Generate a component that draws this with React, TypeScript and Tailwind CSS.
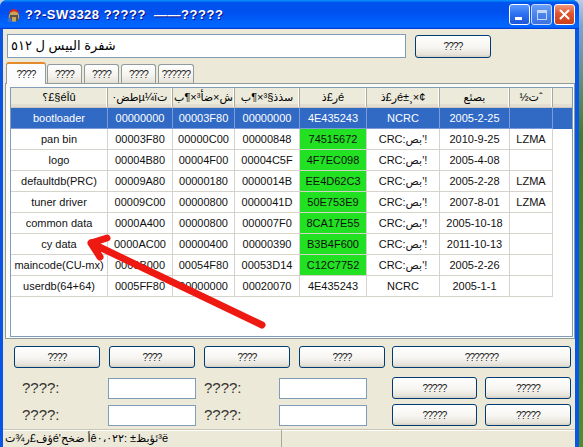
import React from "react";

type Row = {
  name: string;
  addr: string;
  size: string;
  len: string;
  crc: string;
  green: boolean;
  ok: boolean;
  date: string;
  comp: string;
  sel?: boolean;
};

const rows: Row[] = [
  { name: "bootloader", addr: "00000000", size: "00003F80", len: "00000000", crc: "4E435243", green: false, ok: false, date: "2005-2-25", comp: "", sel: true },
  { name: "pan bin", addr: "00003F80", size: "00000C00", len: "00000848", crc: "74515672", green: true, ok: true, date: "2010-9-25", comp: "LZMA" },
  { name: "logo", addr: "00004B80", size: "00004F00", len: "00004C5F", crc: "4F7EC098", green: true, ok: true, date: "2005-4-08", comp: "" },
  { name: "defaultdb(PRC)", addr: "00009A80", size: "00000180", len: "0000014B", crc: "EE4D62C3", green: true, ok: true, date: "2005-2-28", comp: "LZMA" },
  { name: "tuner driver", addr: "00009C00", size: "00000800", len: "0000041D", crc: "50E753E9", green: true, ok: true, date: "2007-8-01", comp: "LZMA" },
  { name: "common data", addr: "0000A400", size: "00000800", len: "000007F0", crc: "8CA17E55", green: true, ok: true, date: "2005-10-18", comp: "" },
  { name: "cy data", addr: "0000AC00", size: "00000400", len: "00000390", crc: "B3B4F600", green: true, ok: true, date: "2011-10-13", comp: "" },
  { name: "maincode(CU-mx)", addr: "0000B000", size: "00054F80", len: "00053D14", crc: "C12C7752", green: true, ok: true, date: "2005-2-26", comp: "" },
  { name: "userdb(64+64)", addr: "0005FF80", size: "00000000", len: "00020070", crc: "4E435243", green: false, ok: false, date: "2005-1-1", comp: "" },
];

const headers = ["؟£§éÎû", "·طضµ¼ïت", "ش×ضأ³×¶ب", "سذذ§³×¶ب", "ر£ذé", "ر£ذé±¸×¢", "بصئع", "½تˆ"];

// status bar text, cut into pieces laid out left to right
const statusParts = ["ت", "¾", "ر", "£", "ؤف", "é", "'", "ضخح", " ", "أ", "ê", "٠،٠٢٢", ":", " ", "±", "ئؤبظ", "³", "ë"];

const XpButton = ({ label, className }: { label: string; className?: string }) => (
  <button
    className={`flex h-[22px] items-center justify-center rounded-[3px] border border-[#003c74] bg-[linear-gradient(180deg,#ffffff_0%,#f6f5f1_55%,#e6e3da_88%,#d4cfc3_100%)] text-[10px] tracking-[-0.8px] text-[#222] ${className ?? ""}`}
  >
    {label}
  </button>
);

const TitleIcon = () => (
  <svg width="16" height="17" viewBox="0 0 16 17">
    <path d="M2.5 7 Q8 -1 13.5 7 Z" fill="#d8261c" />
    <circle cx="8" cy="10.5" r="5.2" fill="#c7a35c" />
    <path d="M4 9 H12 V15 H10 V11 H6 V15 H4 Z" fill="#5a5140" />
    <circle cx="3.5" cy="14" r="2" fill="#3a6fd8" />
  </svg>
);

const TitleBar = () => (
  <div className="flex h-[29px] items-center rounded-t-[7px] bg-[linear-gradient(180deg,#0997ff_0%,#0053ee_9%,#0050ee_40%,#0066ff_88%,#0066ff_93%,#005bff_95%,#003dd7_96%,#003dd7_100%)] pl-[6px] pr-[4px]">
    <TitleIcon />
    <span className="ml-[3px] text-[13px] font-bold tracking-[0.5px] text-white [text-shadow:1px_1px_#0f1089]">
      ??-SW3328 ?????&nbsp;&nbsp;——?????
    </span>
    <div className="ml-auto flex items-center">
      <div className="relative h-[21px] w-[21px] rounded-[3px] border border-white bg-[linear-gradient(180deg,#5a98ff_0%,#2b6ff0_50%,#1c57d8_100%)]">
        <div className="absolute bottom-[4px] left-[5px] h-[3px] w-[7px] bg-white" />
      </div>
      <div className="ml-[1px] flex h-[21px] w-[21px] items-center justify-center rounded-[3px] border border-[#cbdcfb] bg-[linear-gradient(180deg,#6a9ff5_0%,#4a84ec_50%,#3b72e0_100%)]">
        <div className="h-[10px] w-[10px] border border-t-[3px] border-[#c6d6f6]" />
      </div>
      <div className="ml-[2px] flex h-[21px] w-[21px] items-center justify-center rounded-[3px] border border-white bg-[linear-gradient(180deg,#f0997a_0%,#e0542d_45%,#c8401c_100%)]">
        <svg width="11" height="11" viewBox="0 0 11 11">
          <path d="M1.5 1.5 L9.5 9.5 M9.5 1.5 L1.5 9.5" stroke="white" strokeWidth="2" strokeLinecap="round" />
        </svg>
      </div>
    </div>
  </div>
);

const HeaderRow = () => (
  <div className="flex h-[20px] border-b border-[#cbc7b8] bg-[#ebeadb] shadow-[inset_0_-3px_0_#e2ded1]">
    <div className="grid grid-cols-[97px_65px_62px_65px_67px_73px_70px_43px]">
      {headers.map((h, i) => (
        <div
          key={i}
          className="flex items-center justify-center border-r border-[#aca899] text-[11px] text-black shadow-[inset_-1px_0_0_#ffffff]"
        >
          {h}
        </div>
      ))}
    </div>
  </div>
);

const DataRow = ({ r }: { r: Row }) => {
  const line = r.sel ? "border-[#7d9bd6]" : "border-[#d6d3cc]";
  const cell = `flex h-[21px] items-center justify-center border-r border-b ${line}`;
  return (
    <div
      className={`grid grid-cols-[97px_65px_62px_65px_67px_73px_70px_43px] text-[11px] ${
        r.sel ? "bg-[#316ac5] text-white" : "text-[#111]"
      }`}
    >
      <div className={cell}>{r.name}</div>
      <div className={cell}>{r.addr}</div>
      <div className={cell}>{r.size}</div>
      <div className={cell}>{r.len}</div>
      <div className={`${cell} ${r.green ? "bg-[#22e022]" : ""}`}>{r.crc}</div>
      <div className={cell}>{r.ok ? "CRC:بص'!" : "NCRC"}</div>
      <div className={cell}>{r.date}</div>
      <div className={cell}>{r.comp}</div>
    </div>
  );
};

const Field = ({ className }: { className?: string }) => (
  <div className={`h-[21px] border border-[#7f9db9] bg-white ${className ?? ""}`} />
);

const FormRow = ({ className }: { className?: string }) => (
  <div className={`flex h-[22px] items-center ${className ?? ""}`}>
    <div className="w-[105px] pl-[19px] text-[15px] text-[#333]">????:</div>
    <Field className="w-[88px]" />
    <div className="w-[83px] pl-[8px] text-[15px] text-[#333]">????:</div>
    <Field className="w-[88px]" />
    <XpButton label="?????" className="ml-[25px] w-[85px]" />
    <XpButton label="?????" className="ml-[8px] w-[86px]" />
  </div>
);

export default function App() {
  return (
    <div className="relative h-[447px] w-[583px] overflow-hidden bg-[linear-gradient(180deg,#b9cde6_0%,#7aa3d2_6%,#3f7d2e_30%,#4b8f2a_100%)] font-['Liberation_Sans','DejaVu_Sans',sans-serif]">
      <div className="flex h-full w-[579px] flex-col rounded-t-[7px] bg-[#0b55e6]">
        <TitleBar />
        <div className="ml-[3px] mr-[4px] flex flex-1 flex-col bg-[#ece9d8]">
          {/* path field */}
          <div className="ml-[4px] mt-[5px] flex h-[24px] items-start">
            <div className="flex h-[24px] w-[399px] items-center border border-[#7f9db9] bg-white pl-[3px] text-[13px] text-black">
              شفرة البيس ل ٥١٢
            </div>
            <XpButton label="????" className="ml-[9px] mt-[1px] h-[23px] w-[76px] border-[#2b4f8f]" />
          </div>

          {/* tabs */}
          <div className="relative z-10 ml-[3px] mt-[4px] flex h-[21px] items-end">
            <div className="-mb-[1px] flex h-[22px] w-[40px] items-center justify-center rounded-t-[3px] border border-t-2 border-b-0 border-[#919b9c] border-t-[#e68b2c] bg-[#fcfcfe] text-[10px] tracking-[-0.8px] text-[#222]">
              ????
            </div>
            {["????", "????", "????", "??????"].map((t, i) => (
              <div
                key={i}
                className={`flex h-[19px] items-center justify-center rounded-t-[3px] border border-b-0 border-[#919b9c] bg-[linear-gradient(180deg,#ffffff_0%,#f3f2ec_60%,#e3e1d6_100%)] text-[10px] tracking-[-0.8px] text-[#222] ${
                  i === 0 ? "ml-[1px] w-[35px]" : i === 3 ? "ml-[2px] w-[36px]" : "ml-[2px] w-[35px]"
                }`}
              >
                {t}
              </div>
            ))}
          </div>

          {/* tab panel with list */}
          <div className="ml-[2px] h-[256px] border border-[#919b9c] bg-[#fbfbf8] pl-[4px] pr-[1px] pt-[3px]">
            <div className="h-[250px] overflow-hidden border border-[#7f9db9] bg-white">
              <HeaderRow />
              {rows.map((r) => (
                <DataRow key={r.name} r={r} />
              ))}
            </div>
          </div>

          {/* action buttons */}
          <div className="mt-[7px] flex pl-[11px]">
            <XpButton label="????" className="w-[86px]" />
            <XpButton label="????" className="ml-[9px] w-[86px]" />
            <XpButton label="????" className="ml-[9px] w-[86px]" />
            <XpButton label="????" className="ml-[9px] w-[86px]" />
            <XpButton label="???????" className="ml-[7px] w-[179px]" />
          </div>

          <FormRow className="mt-[9px]" />
          <FormRow className="mt-[5px]" />

          {/* status bar */}
          <div className="mt-[3px] flex flex-1 border-t border-[#c9c5b5] shadow-[inset_0_1px_0_#ffffff]">
            <div className="flex w-[279px] items-center border-r border-[#aca899] pl-[2px] text-[11px] text-black">
              <span className="whitespace-pre">
                {statusParts.map((p, i) => (
                  <span key={i} className="[unicode-bidi:isolate]">
                    {p}
                  </span>
                ))}
              </span>
            </div>
          </div>
        </div>
      </div>

      {/* red annotation arrow */}
      <svg className="pointer-events-none absolute left-0 top-0" width="583" height="447" viewBox="0 0 583 447">
        <path
          d="M262 325 L91 243 M91 243 L107 238 M91 243 L100 257"
          stroke="#ee1a12"
          strokeWidth="7"
          strokeLinecap="round"
          strokeLinejoin="round"
          fill="none"
        />
      </svg>
    </div>
  );
}
